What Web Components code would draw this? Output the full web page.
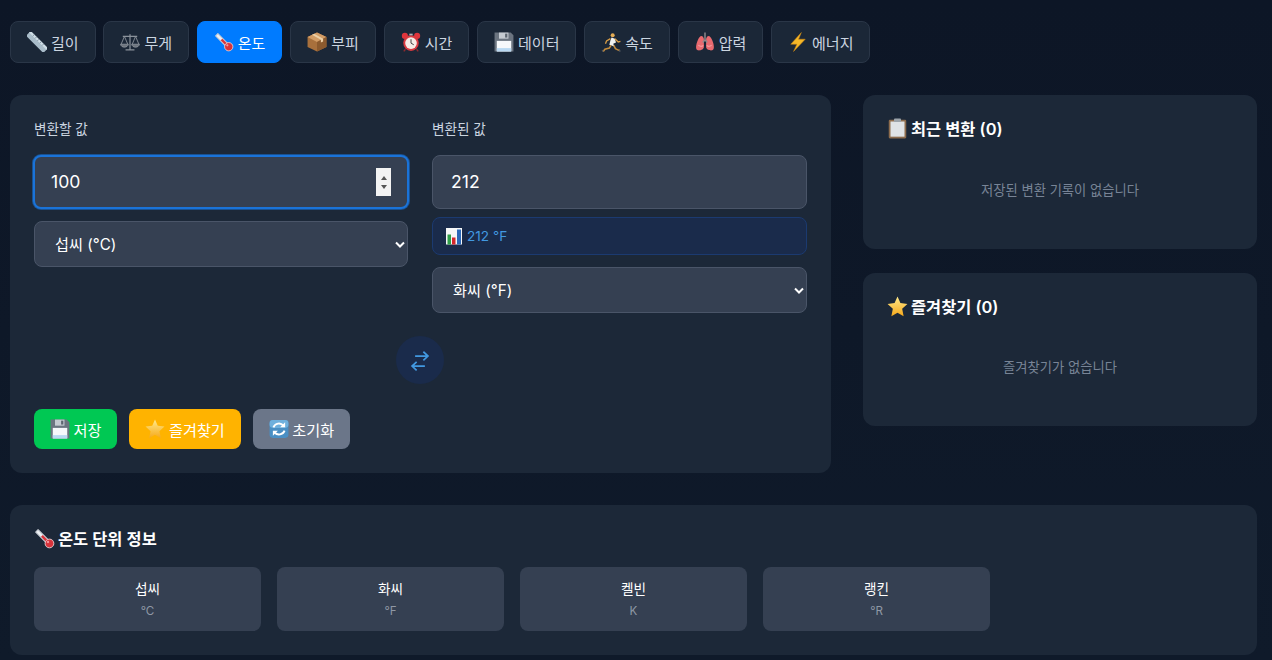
<!DOCTYPE html>
<html lang="ko">
<head>
<meta charset="utf-8">
<title>단위 변환기</title>
<style>
	html, body { margin: 0; height: 100%; }
	body {
		background: linear-gradient(180deg, #0d1626, #0f1a2a);
		color: #fff;
		font-family: Inter, "Noto Sans CJK KR", sans-serif;
		overflow: hidden;
	}
</style>
</head>
<body>
<unit-app></unit-app>

<script>
	const ICONS = {
		ruler: `<g transform="rotate(45 18 18)"><rect x="-4" y="12" width="44" height="12" rx="1" fill="#a9bcc9"/><rect x="-4" y="12" width="44" height="4" fill="#cfdde6"/><path d="M5 12v4M11 12v4M17 12v4M23 12v4M29 12v4" stroke="#71838f" stroke-width="1.4"/></g>`,
		scale: `<g fill="none" stroke="#8b929b" stroke-width="1.6"><path d="M18 4v27M5 8h26M10 32h16" stroke-width="2.2"/><path d="M8 8 2 22M8 8l6 14M28 8l-6 14M28 8l6 14"/><path d="M1 22c1 7 13 7 14 0zM21 22c1 7 13 7 14 0z" fill="#6d747d"/></g>`,
		thermo: `<path d="M3 7 7 3 27 23 23 27z" fill="#eef1f4" stroke="#c9ced6" stroke-width="2" stroke-linejoin="round"/><path d="M12 15 15 12 26 23 23 26z" fill="#d8333b"/><circle cx="26.500" cy="26.500" r="7.500" fill="#d8333b" stroke="#e8d6d8" stroke-width="1.500"/><circle cx="24" cy="24" r="2" fill="#f59aa0"/>`,
		box: `<path d="M18 1 35 9V27L18 35 1 27V9z" fill="#a8703c"/><path d="M18 1 35 9 18 18 1 9z" fill="#d29d66"/><path d="M18 18 35 9V27L18 35z" fill="#8b5a2e"/><path d="M9 5 25 14V19L29 17V12L13 3z" fill="#ecd0a6"/>`,
		clock: `<circle cx="7" cy="7" r="5.500" fill="#e0353c"/><circle cx="29" cy="7" r="5.500" fill="#e0353c"/><path d="M8 31 5 35M28 31l3 4" stroke="#8d2a2e" stroke-width="2.500"/><circle cx="18" cy="20" r="14" fill="#d93a40"/><circle cx="18" cy="20" r="10.500" fill="#f5ece6"/><path d="M18 13v7l5 3" fill="none" stroke="#444" stroke-width="1.800"/><path d="M15 3h6v3h-6z" fill="#b0b4ba"/>`,
		floppy: `<path d="M1 1H30L35 6V35H1z" fill="#6b7480"/><rect x="9" y="1" width="17" height="11" fill="#c4cad1"/><rect x="20" y="3" width="4" height="7" fill="#5c6570"/><rect x="5" y="16" width="26" height="19" fill="#f6f8fb"/><rect x="5" y="29" width="26" height="6" fill="#b9d8f2"/>`,
		runner: `<circle cx="21" cy="6" r="3.600" fill="#e5ad55"/><path d="M19 10 25 12 27 19 22 21 24 26 15 23 17 15z" fill="#f1f2f0"/><path d="M17 12 10 16 8 21M25 12l6 6 4-1" fill="none" stroke="#d99d45" stroke-width="2.400"/><path d="M18 24 15 29 7 31 4 35M23 24l3 6 6 3 2 0" fill="none" stroke="#c48c3c" stroke-width="2.800"/><path d="M4 35 2 33M32 33l3 2" stroke="#50565e" stroke-width="2.500"/>`,
		lungs: `<path d="M16 12C13 4 8 7 5 15 2 22 0 32 5 33c5 1 11-2 11-6z" fill="#e86a6f"/><path d="M20 12c3-8 8-5 11 3 3 7 5 17 0 18-5 1-11-2-11-6z" fill="#e86a6f"/><path d="M6 24c3 2 7 2 9 0M30 24c-3 2-7 2-9 0" stroke="#f59a9d" stroke-width="2" fill="none"/><path d="M18 1v14M18 14 14 19M18 14l4 5" stroke="#8e8a8c" stroke-width="2.600" fill="none"/>`,
		bolt: `<path d="M24 1 5 22H16L10 35 31 13H19z" fill="#f5b728" stroke="#c98414" stroke-width="1"/>`,
		star: `<path d="M18 1 23 12 35 13.500 26 22 28.500 34.500 18 28.500 7.500 34.500 10 22 1 13.500 13 12z" fill="url(#sg)"/><defs><linearGradient id="sg" x1="0" y1="0" x2="0" y2="1"><stop offset="0" stop-color="#ffe98a"/><stop offset="1" stop-color="#f6a91c"/></linearGradient></defs>`,
		refresh: `<rect x="1" y="2" width="34" height="32" rx="6" fill="#4a8fc4"/><rect x="1" y="2" width="34" height="14" rx="6" fill="#6fb0dd"/><path d="M8 15a10.500 10.500 0 0 1 18-3" fill="none" stroke="#fff" stroke-width="3.400"/><path d="M29 6v9h-9z" fill="#fff"/><path d="M28 21a10.500 10.500 0 0 1-18 3" fill="none" stroke="#fff" stroke-width="3.400"/><path d="M7 30v-9h9z" fill="#fff"/>`,
		clipboard: `<rect x="3" y="3" width="30" height="32" rx="2" fill="#8d6c4d"/><rect x="6" y="6" width="24" height="26" fill="#dfe3e6"/><rect x="12" y="1" width="12" height="6" rx="1.500" fill="#9ca4ab"/>`,
		chart: `<rect x="2" y="2" width="32" height="33" fill="#f6f7f8"/><rect x="5" y="15" width="7" height="20" fill="#2f9e48"/><rect x="14" y="21" width="7" height="14" fill="#d4272b"/><rect x="24" y="5" width="8" height="30" fill="#2c68b8"/>`,
		swap: `<path d="M10 11.500H31M23.500 4.500l7.500 7-7.500 7" fill="none" stroke="#4299e1" stroke-width="2.800"/><path d="M26 28H5M12.500 21 5 28l7.500 7" fill="none" stroke="#4299e1" stroke-width="2.800"/>`
	};

	class UnitIcon extends HTMLElement {
		connectedCallback() {
			let size = this.getAttribute('size') || 20;
			this.attachShadow({ mode: "open" });
			this.shadowRoot.innerHTML = `<style>
				:host { display: inline-flex; flex: none; width: ${size}px; height: ${size}px; }
				svg { width: 100%; height: 100%; display: block; }
			</style><svg viewBox="0 0 36 36" aria-hidden="true">${ICONS[this.getAttribute('name')]}</svg>`;
		}
	}

	class UnitTab extends HTMLElement {
		constructor() {
			super();
			this.attachShadow({ mode: "open" });
			this.shadowRoot.innerHTML = `<style>
				:host {
					display: inline-flex;
					align-items: center;
					gap: 4px;
					height: 42px;
					box-sizing: border-box;
					padding: 0 16px;
					border: 1px solid #2a3647;
					border-radius: 8px;
					background: #1b2737;
					color: #cbd5e0;
					font-size: 15px;
				}
				:host([active]) { background: #007bff; border-color: #007bff; color: #fff; }
			</style><unit-icon name="${this.getAttribute('icon')}" size="20"></unit-icon><slot></slot>`;
		}
	}

	class UnitPanel extends HTMLElement {
		constructor() {
			super();
			this.attachShadow({ mode: "open" });
			this.shadowRoot.innerHTML = `<style>
				:host {
					display: block;
					box-sizing: border-box;
					padding: 24px;
					background: #1c2838;
					border-radius: 12px;
				}
			</style><slot></slot>`;
		}
	}

	class PanelTitle extends HTMLElement {
		constructor() {
			super();
			this.attachShadow({ mode: "open" });
			this.shadowRoot.innerHTML = `<style>
				:host {
					display: flex;
					align-items: center;
					gap: 3px;
					height: 18px;
					font-size: 16.4px;
					font-weight: 600;
					color: #fff;
				}
			</style><unit-icon name="${this.getAttribute('icon')}" size="21"></unit-icon><slot></slot>`;
		}
	}

	class ValueField extends HTMLElement {
		constructor() {
			super();
			let focused = this.hasAttribute('focused');
			this.attachShadow({ mode: "open" });
			this.shadowRoot.innerHTML = `<style>
				:host {
					display: flex;
					align-items: center;
					box-sizing: border-box;
					height: 54px;
					padding: 0 16px 0 ${focused ? 16 : 18}px;
					border: 1px solid #4a5568;
					border-radius: 8px;
					background: #354052;
					color: #fff;
					font-size: 17.6px;
				}
				:host([focused]) {
					border: 2px solid #1a73d8;
					box-shadow: 0 0 0 1px rgba(26, 115, 216, .55);
					margin: 0 -1px;
				}
				.value { flex: 1; padding-bottom: 2px; }
				.spin {
					width: 15px;
					height: 28px;
					background: #f3f3f3;
					display: flex;
					flex-direction: column;
					align-items: center;
					justify-content: center;
					gap: 5px;
				}
				.spin i { width: 0; height: 0; border: 3.5px solid transparent; }
				.spin i:first-child { border-top: 0; border-bottom: 4px solid #555; }
				.spin i:last-child { border-bottom: 0; border-top: 4px solid #555; }
			</style><span class="value"><slot></slot></span>${focused ? '<span class="spin"><i></i><i></i></span>' : ''}`;
		}
	}

	class UnitSelect extends HTMLElement {
		constructor() {
			super();
			this.attachShadow({ mode: "open" });
			this.shadowRoot.innerHTML = `<style>
				:host {
					display: flex;
					align-items: center;
					justify-content: space-between;
					box-sizing: border-box;
					height: 46px;
					padding: 0 2px 0 20px;
					border: 1px solid #4a5568;
					border-radius: 8px;
					background: #354052;
					color: #fff;
					font-size: 15.2px;
				}
				.label { padding-bottom: 2px; }
				svg { width: 10px; height: 7px; }
			</style><span class="label"><slot></slot></span><svg viewBox="0 0 10 7"><path d="M1 1.500 5 5.500 9 1.500" fill="none" stroke="#fff" stroke-width="2"/></svg>`;
		}
	}

	class ActionButton extends HTMLElement {
		constructor() {
			super();
			this.attachShadow({ mode: "open" });
			this.shadowRoot.innerHTML = `<style>
				:host {
					display: inline-flex;
					align-items: center;
					gap: 3.5px;
					height: 40px;
					padding: 0 16px;
					border-radius: 8px;
					background: var(--bg);
					color: #fff;
					font-size: 15.2px;
				}
			</style><unit-icon name="${this.getAttribute('icon')}" size="20"></unit-icon><slot></slot>`;
		}
	}

	class InfoCard extends HTMLElement {
		constructor() {
			super();
			this.attachShadow({ mode: "open" });
			this.shadowRoot.innerHTML = `<style>
				:host {
					display: flex;
					flex-direction: column;
					align-items: center;
					box-sizing: border-box;
					height: 64px;
					padding-top: 12px;
					border-radius: 8px;
					background: #354052;
				}
				.name { font-size: 13.6px; line-height: 20px; color: #fff; }
				.unit { font-size: 11.6px; line-height: 16px; margin-top: 4px; color: #8f98a5; }
			</style><div class="name"><slot></slot></div><div class="unit">${this.getAttribute('unit')}</div>`;
		}
	}

	class UnitApp extends HTMLElement {
		constructor() {
			super();
			this.attachShadow({ mode: "open" });
			this.shadowRoot.innerHTML = `<style>
				:host { display: block; padding: 21px 15px 0 10px; }
				.tabs { display: flex; gap: 7.8px; margin-bottom: 32px; }
				.main { display: grid; grid-template-columns: 821px 394px; gap: 32px; margin-bottom: 32px; }
				.fields { display: grid; grid-template-columns: 374px 375px; gap: 24px; }
				.col { display: flex; flex-direction: column; }
				label { font-size: 13.6px; line-height: 20px; color: #cbd5e0; margin-bottom: 16px; }
				value-field + unit-select { margin-top: 12px; }
				.result {
					display: flex;
					align-items: center;
					gap: 4px;
					height: 38px;
					box-sizing: border-box;
					margin: 8px 0 12px;
					padding: 0 12px;
					border: 1px solid #1b3a70;
					border-radius: 8px;
					background: #1a2b4b;
					color: #4299e1;
					font-size: 13.6px;
				}
				.swap {
					width: 48px;
					height: 48px;
					margin: 23px 0 25px 362px;
					border-radius: 50%;
					background: #1a2b4b;
					display: flex;
					align-items: center;
					justify-content: center;
				}
				.actions { display: flex; gap: 12px; }
				.side { display: flex; flex-direction: column; gap: 24px; }
				.recent { height: 154px; }
				.favs { height: 153px; }
				.empty { text-align: center; font-size: 13.3px; line-height: 20px; color: #788496; margin-top: 43px; }
				.favs .empty { margin-top: 42px; }
				.cards { display: grid; grid-template-columns: repeat(4, 227px); gap: 16px; margin-top: 20px; }
				.info { height: 150px; }
			</style>
			<div class="tabs">
				<unit-tab icon="ruler">길이</unit-tab>
				<unit-tab icon="scale">무게</unit-tab>
				<unit-tab icon="thermo" active>온도</unit-tab>
				<unit-tab icon="box">부피</unit-tab>
				<unit-tab icon="clock">시간</unit-tab>
				<unit-tab icon="floppy">데이터</unit-tab>
				<unit-tab icon="runner">속도</unit-tab>
				<unit-tab icon="lungs">압력</unit-tab>
				<unit-tab icon="bolt">에너지</unit-tab>
			</div>
			<div class="main">
				<unit-panel>
					<div class="fields">
						<div class="col">
							<label>변환할 값</label>
							<value-field focused>100</value-field>
							<unit-select>섭씨 (°C)</unit-select>
						</div>
						<div class="col">
							<label>변환된 값</label>
							<value-field>212</value-field>
							<div class="result"><unit-icon name="chart" size="18"></unit-icon>212 °F</div>
							<unit-select>화씨 (°F)</unit-select>
						</div>
					</div>
					<div class="swap"><unit-icon name="swap" size="22"></unit-icon></div>
					<div class="actions">
						<action-button icon="floppy" style="--bg:#00c853">저장</action-button>
						<action-button icon="star" style="--bg:#ffb300">즐겨찾기</action-button>
						<action-button icon="refresh" style="--bg:#6b7689">초기화</action-button>
					</div>
				</unit-panel>
				<div class="side">
					<unit-panel class="recent">
						<panel-title icon="clipboard">최근 변환 (0)</panel-title>
						<div class="empty">저장된 변환 기록이 없습니다</div>
					</unit-panel>
					<unit-panel class="favs">
						<panel-title icon="star">즐겨찾기 (0)</panel-title>
						<div class="empty">즐겨찾기가 없습니다</div>
					</unit-panel>
				</div>
			</div>
			<unit-panel class="info">
				<panel-title icon="thermo">온도 단위 정보</panel-title>
				<div class="cards">
					<info-card unit="°C">섭씨</info-card>
					<info-card unit="°F">화씨</info-card>
					<info-card unit="K">켈빈</info-card>
					<info-card unit="°R">랭킨</info-card>
				</div>
			</unit-panel>`;
		}
	}

	customElements.define('unit-icon', UnitIcon);
	customElements.define('unit-tab', UnitTab);
	customElements.define('unit-panel', UnitPanel);
	customElements.define('panel-title', PanelTitle);
	customElements.define('value-field', ValueField);
	customElements.define('unit-select', UnitSelect);
	customElements.define('action-button', ActionButton);
	customElements.define('info-card', InfoCard);
	customElements.define('unit-app', UnitApp);
</script>
</body>
</html>
